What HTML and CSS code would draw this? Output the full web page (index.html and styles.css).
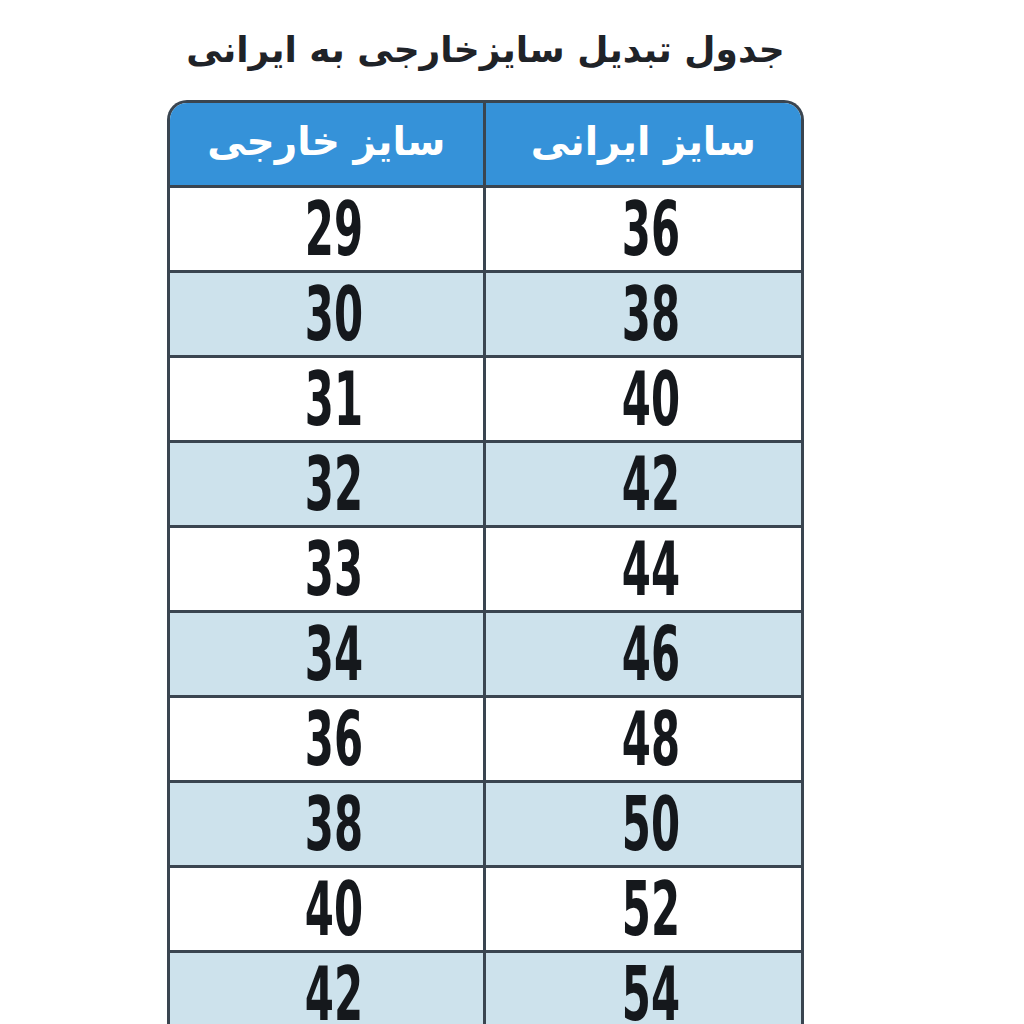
FILE: index.html
```html
<!DOCTYPE html>
<html lang="fa" dir="rtl">
<head>
<meta charset="utf-8">
<title>جدول تبدیل سایز</title>
<link rel="stylesheet" href="styles.css">
</head>
<body>
<div class="page">
  <h1 class="title">جدول تبدیل سایزخارجی به ایرانی</h1>
  <div class="table">
    <div class="row head"><div class="cell">سایز ایرانی</div><div class="cell">سایز خارجی</div></div>
    <div class="row"><div class="cell"><span class="num">36</span></div><div class="cell"><span class="num">29</span></div></div>
    <div class="row alt"><div class="cell"><span class="num">38</span></div><div class="cell"><span class="num">30</span></div></div>
    <div class="row"><div class="cell"><span class="num">40</span></div><div class="cell"><span class="num">31</span></div></div>
    <div class="row alt"><div class="cell"><span class="num">42</span></div><div class="cell"><span class="num">32</span></div></div>
    <div class="row"><div class="cell"><span class="num">44</span></div><div class="cell"><span class="num">33</span></div></div>
    <div class="row alt"><div class="cell"><span class="num">46</span></div><div class="cell"><span class="num">34</span></div></div>
    <div class="row"><div class="cell"><span class="num">48</span></div><div class="cell"><span class="num">36</span></div></div>
    <div class="row alt"><div class="cell"><span class="num">50</span></div><div class="cell"><span class="num">38</span></div></div>
    <div class="row"><div class="cell"><span class="num">52</span></div><div class="cell"><span class="num">40</span></div></div>
    <div class="row alt"><div class="cell"><span class="num">54</span></div><div class="cell"><span class="num">42</span></div></div>
  </div>
</div>
</body>
</html>
```
FILE: styles.css
```css
html, body {
  margin: 0;
  padding: 0;
  background: #ffffff;
  height: 1024px;
  overflow: hidden;
}
.page {
  width: 637px;
  margin-right: 220px;
  margin-left: 167px;
  padding-top: 22px;
  font-family: "DejaVu Sans", "Noto Sans", sans-serif;
}
.title {
  margin: 0;
  height: 78px;
  text-align: center;
  font-size: 36px;
  line-height: 56px;
  font-weight: bold;
  color: #1f2328;
}
.table {
  border: 3px solid #3a4550;
  border-bottom: none;
  border-radius: 20px 20px 0 0;
  overflow: hidden;
}
.row {
  display: grid;
  grid-template-columns: 1fr 1fr;
  height: 82px;
  border-top: 3px solid #3a4550;
  background: #ffffff;
}
.row.alt {
  background: #cde2ec;
}
.row.head {
  border-top: none;
  height: 82px;
  background: #3592d9;
  color: #ffffff;
}
.cell {
  display: flex;
  align-items: center;
  justify-content: center;
}
.cell + .cell {
  border-right: 3px solid #3a4550;
}
.head .cell {
  font-size: 39px;
  font-weight: bold;
  padding-bottom: 6px;
}
.num {
  display: inline-block;
  font-family: "DejaVu Sans Condensed", "DejaVu Sans", sans-serif;
  font-weight: bold;
  font-size: 75px;
  line-height: 80px;
  color: #15181c;
  margin-top: 0;
  margin-left: 16px;
  transform: scaleX(0.62);
}
```
